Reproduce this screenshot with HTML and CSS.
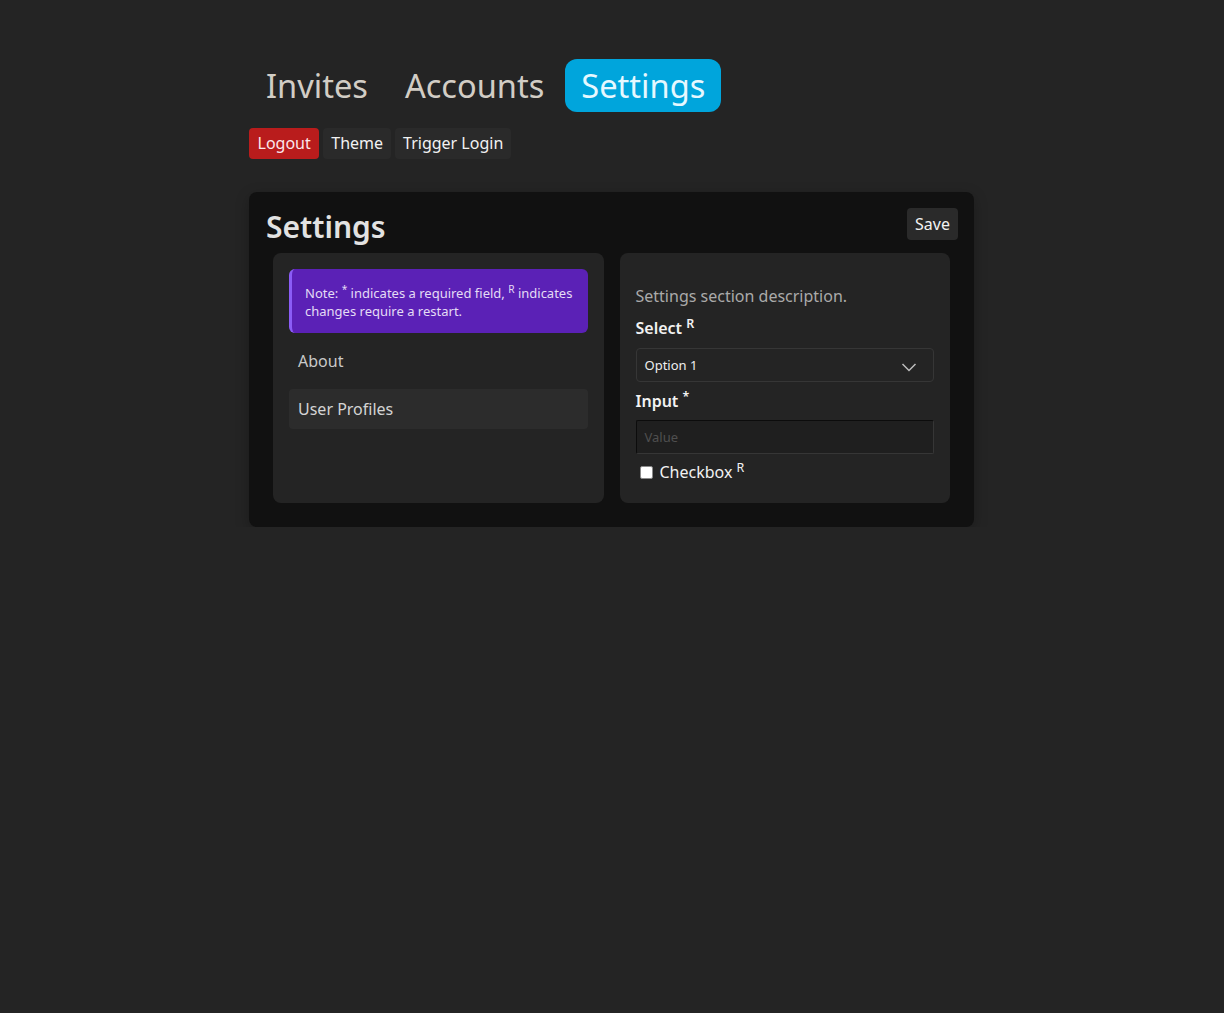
FILE: index.html
```html
<!DOCTYPE html>
<html>
<head>
<meta charset="utf-8">
<link rel="stylesheet" href="styles.css">
</head>
<body>
<div class="page">
  <nav class="tabs">
    <a class="tab">Invites</a>
    <a class="tab">Accounts</a>
    <a class="tab active">Settings</a>
  </nav>
  <div class="actions">
    <button class="btn btn-red">Logout</button>
    <button class="btn">Theme</button>
    <button class="btn">Trigger Login</button>
  </div>
  <section class="card">
    <header class="card-head">
      <h1 class="title">Settings</h1>
      <button class="btn save">Save</button>
    </header>
    <div class="panels">
      <div class="panel side">
        <div class="note">Note: <sup>*</sup> indicates a required field, <sup>R</sup> indicates changes require a restart.</div>
        <div class="item">About</div>
        <div class="item selected">User Profiles</div>
      </div>
      <div class="panel form">
        <p class="desc">Settings section description.</p>
        <label class="label">Select <sup>R</sup></label>
        <div class="select">
          <span>Option 1</span>
          <svg class="chev" width="16" height="10" viewBox="0 0 16 10"><path d="M1.5 2 L8 8.5 L14.5 2" fill="none" stroke="#bdbdbd" stroke-width="1.5"/></svg>
        </div>
        <label class="label">Input <sup>*</sup></label>
        <div class="input"><span class="ph">Value</span></div>
        <div class="check">
          <span class="box"></span>
          <span>Checkbox <sup>R</sup></span>
        </div>
      </div>
    </div>
  </section>
</div>
</body>
</html>
```

FILE: styles.css
```css
html, body {
  margin: 0;
  padding: 0;
  background: #242424;
  font-family: "Noto Sans", "Open Sans", sans-serif;
  color: #e6e6e6;
}
.page {
  width: 725px;
  margin-left: calc(50% - 363px);
  padding-top: 59px;
}
.tabs {
  display: flex;
  gap: 5px;
  padding-left: 1px;
}
.tab {
  font-size: 32.6px;
  line-height: 45px;
  padding: 4px 16px;
  border-radius: 12px;
  color: #d2cdc5;
}
.tab.active {
  background: #00a5dc;
  color: #e6f8ff;
}
.actions {
  display: flex;
  gap: 4px;
  margin-top: 16px;
}
.btn {
  font-family: inherit;
  font-size: 16px;
  line-height: 23px;
  padding: 4px 8px;
  border: none;
  border-radius: 4px;
  background: #2a2a2a;
  color: #f2f2f2;
}
.btn-red {
  background: #b91c1c;
  color: #fbe7ec;
  padding: 4px 8.5px;
}
.card {
  margin-top: 33px;
  background: #111111;
  border-radius: 8px;
  padding: 16px 16px 16px 17px;
  box-shadow: 0 4px 14px rgba(0,0,0,0.25);
}
.card-head {
  display: flex;
  justify-content: space-between;
  align-items: flex-start;
  height: 36px;
  margin-bottom: 9px;
}
.title {
  margin: 0;
  font-size: 30px;
  line-height: 38px;
  font-weight: 600;
  color: #e2e2e2;
}
.save {
  line-height: 24px;
}
.panels {
  display: flex;
  gap: 16px;
  margin: 0 8px 8px 7px;
}
.panel {
  flex: 1;
  background: #242424;
  border-radius: 8px;
  padding: 16px;
  height: 250px;
  box-sizing: border-box;
}
.note {
  background: #5b21b6;
  border-left: 3px solid #8b5cf6;
  border-radius: 6px;
  padding: 15px 14px 13px 13px;
  font-size: 13px;
  line-height: 18px;
  color: #e4dcf5;
}
sup {
  font-size: 0.78em;
  line-height: 0;
  vertical-align: 0.5em;
}
.item {
  margin-top: 8px;
  height: 40px;
  line-height: 40px;
  padding: 0 9px;
  font-size: 16px;
  color: #c9c9c9;
  border-radius: 4px;
}
.item.selected {
  background: #2c2c2c;
  color: #d4d4d4;
}
.form {
  display: flex;
  flex-direction: column;
}
.desc {
  margin: 16px 0 10px;
  font-size: 16px;
  line-height: 22px;
  color: #aaaaaa;
}
.label {
  display: block;
  font-size: 16px;
  line-height: 22px;
  font-weight: 600;
  color: #f2f2f2;
  margin-bottom: 9px;
}
.select {
  height: 34px;
  box-sizing: border-box;
  border: 1px solid #363636;
  border-radius: 4px;
  display: flex;
  align-items: center;
  justify-content: space-between;
  padding: 0 16px 0 8px;
  font-size: 13px;
  color: #eeeeee;
  margin-bottom: 8px;
}
.chev { margin-top: 3px; }
.input {
  height: 34px;
  box-sizing: border-box;
  border: 1px solid #363636;
  border-top-color: #0c0c0c;
  border-left-color: #0c0c0c;
  border-radius: 2px;
  background: #1f1f1f;
  display: flex;
  align-items: center;
  padding: 0 8px;
  font-size: 13px;
  margin-top: -1px;
  margin-bottom: 7px;
}
.ph { color: #4f4f4f; }
.check {
  display: flex;
  align-items: center;
  gap: 7px;
  font-size: 16px;
  line-height: 22px;
  color: #f2f2f2;
  padding-left: 4px;
}
.box {
  width: 11px;
  height: 11px;
  background: #ffffff;
  border: 1px solid #8a8a8a;
  border-radius: 2px;
}
```
